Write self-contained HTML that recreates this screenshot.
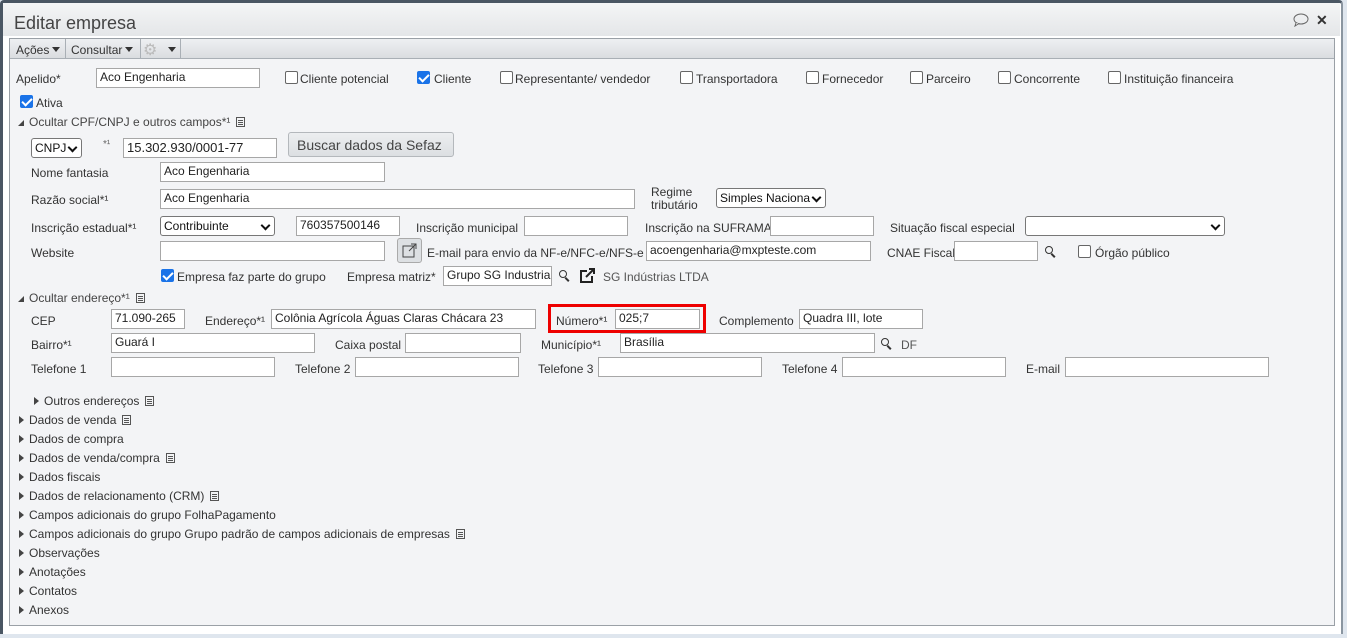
<!DOCTYPE html><html><head><meta charset="utf-8"><style>
*{box-sizing:border-box;margin:0;padding:0}
body{width:1347px;height:638px;overflow:hidden;background:#dfe6ee;font-family:"Liberation Sans",sans-serif;font-size:12px;color:#333;position:relative}
.a{position:absolute;white-space:nowrap}
.win{position:absolute;left:0;top:0;width:1343px;height:634px;background:#fff;border:3px solid #4a5663;border-bottom:none;border-right:2px solid #8a95a0;border-radius:4px 4px 0 0}
.title{position:absolute;left:3px;top:3px;width:1337px;height:33px;background:linear-gradient(#f4f5f6,#e4e6e8)}
.panel{position:absolute;left:9px;top:38px;width:1326px;height:588px;border:1px solid #9aa0a6;background:#f3f4f6}
.tb{position:absolute;left:0;top:0;width:100%;height:20px;background:linear-gradient(#eef0f2,#dadde0);border-bottom:1px solid #a9afb5}
.in{position:absolute;height:20px;border:1px solid #a7a7a7;background:#fff;padding:1px 3px;font-size:12px;color:#222;white-space:nowrap;overflow:hidden}
.cb{position:absolute;width:13px;height:13px;border:1px solid #666;border-radius:2px;background:#fff}
.cb.on{background:#1a73e8;border-color:#1a73e8}
.cb.on::after{content:"";position:absolute;left:3px;top:0px;width:4px;height:8px;border:solid #fff;border-width:0 2px 2px 0;transform:rotate(45deg)}
.sel{position:absolute;height:20px;border:1px solid #777;border-radius:3px;background:#fff;padding:2px 3px;font-size:12px;color:#111}
.sel::after{content:"";position:absolute;right:5px;top:5px;width:5px;height:5px;border:solid #111;border-width:0 2px 2px 0;transform:rotate(45deg)}
.tri{display:inline-block;width:0;height:0;border-top:4px solid transparent;border-bottom:4px solid transparent;border-left:5px solid #444;margin-right:5px;vertical-align:0}
.tdn{display:inline-block;width:0;height:0;border-left:4px solid transparent;border-right:4px solid transparent;border-top:5px solid #333;margin-left:3px;vertical-align:2px}
.opn{display:inline-block;width:0;height:0;border-left:6px solid transparent;border-bottom:6px solid #444;margin-right:5px;vertical-align:0}
.doc{display:inline-block;width:9px;height:10px;border:1px solid #555;margin-left:6px;vertical-align:-1px;background:linear-gradient(#555,#555) 1px 2px/5px 1px no-repeat,linear-gradient(#555,#555) 1px 4px/5px 1px no-repeat,linear-gradient(#555,#555) 1px 6px/5px 1px no-repeat}
.mg{position:absolute;width:8px;height:8px;border:1.5px solid #333;border-radius:50%}
.mg::after{content:"";position:absolute;left:6px;top:6px;width:5px;height:1.5px;background:#333;transform:rotate(45deg);transform-origin:0 0}
</style></head><body>
<div class="win"></div>
<div class="title"><span class="a" style="left:11px;top:10px;font-size:18px;color:#444">Editar empresa</span>
<svg class="a" style="left:1289px;top:10px" width="18" height="14"><ellipse cx="9" cy="6" rx="7" ry="5" fill="none" stroke="#666"/><path d="M4 10 L3 13 L7 10.5" fill="#fff" stroke="#666"/></svg>
<span class="a" style="left:1313px;top:9px;font-size:14px;font-weight:bold;color:#333">✕</span></div>
<div class="panel">
<div class="tb">
<span class="a" style="left:6px;top:4px;color:#333">Ações<span class="tdn"></span></span>
<span class="a" style="left:55px;top:0;width:1px;height:19px;background:#a9afb5"></span>
<span class="a" style="left:61px;top:4px;color:#333">Consultar<span class="tdn"></span></span>
<span class="a" style="left:130px;top:0;width:1px;height:19px;background:#a9afb5"></span>
<span class="a" style="left:133px;top:1px;font-size:16px;color:#bbb">⚙</span>
<span class="a" style="left:155px;top:4px"><span class="tdn"></span></span>
<span class="a" style="left:170px;top:0;width:1px;height:19px;background:#a9afb5"></span>
</div>
</div>
<span class="a" style="left:16px;top:72px">Apelido*</span>
<div class="in" style="left:96px;top:68px;width:164px">Aco Engenharia</div>
<div class="cb" style="left:285px;top:71px"></div><span class="a" style="left:300px;top:72px">Cliente potencial</span>
<div class="cb on" style="left:417px;top:71px"></div><span class="a" style="left:434px;top:72px">Cliente</span>
<div class="cb" style="left:500px;top:71px"></div><span class="a" style="left:515px;top:72px">Representante/ vendedor</span>
<div class="cb" style="left:680px;top:71px"></div><span class="a" style="left:696px;top:72px">Transportadora</span>
<div class="cb" style="left:806px;top:71px"></div><span class="a" style="left:822px;top:72px">Fornecedor</span>
<div class="cb" style="left:910px;top:71px"></div><span class="a" style="left:926px;top:72px">Parceiro</span>
<div class="cb" style="left:998px;top:71px"></div><span class="a" style="left:1014px;top:72px">Concorrente</span>
<div class="cb" style="left:1108px;top:71px"></div><span class="a" style="left:1124px;top:72px">Instituição financeira</span>
<div class="cb on" style="left:20px;top:95px"></div><span class="a" style="left:36px;top:96px">Ativa</span>
<span class="a" style="left:18px;top:115px;color:#444"><span class="opn"></span>Ocultar CPF/CNPJ e outros campos*¹<span class="doc"></span></span>
<div class="sel" style="left:31px;top:138px;width:51px">CNPJ</div>
<span class="a" style="left:103px;top:139px;font-size:10px;color:#666">*¹</span>
<div class="in" style="left:123px;top:138px;width:154px;font-size:13px">15.302.930/0001-77</div>
<div class="a" style="left:288px;top:132px;width:166px;height:25px;border:1px solid #b4b8bc;border-radius:3px;background:linear-gradient(#eceef0,#dcdfe2);font-size:14px;color:#444;padding:4px 8px">Buscar dados da Sefaz</div>
<span class="a" style="left:31px;top:166px">Nome fantasia</span>
<div class="in" style="left:160px;top:162px;width:225px">Aco Engenharia</div>
<span class="a" style="left:31px;top:193px">Razão social*¹</span>
<div class="in" style="left:160px;top:189px;width:475px">Aco Engenharia</div>
<span class="a" style="left:651px;top:186px;line-height:13px">Regime<br>tributário</span>
<div class="sel" style="left:716px;top:188px;width:110px">Simples Naciona</div>
<span class="a" style="left:31px;top:221px">Inscrição estadual*¹</span>
<div class="sel" style="left:160px;top:216px;width:115px">Contribuinte</div>
<div class="in" style="left:296px;top:216px;width:104px">760357500146</div>
<span class="a" style="left:416px;top:221px">Inscrição municipal</span>
<div class="in" style="left:524px;top:216px;width:104px"></div>
<span class="a" style="left:645px;top:221px">Inscrição na SUFRAMA</span>
<div class="in" style="left:770px;top:216px;width:104px"></div>
<span class="a" style="left:890px;top:221px">Situação fiscal especial</span>
<div class="sel" style="left:1025px;top:216px;width:200px"></div>
<span class="a" style="left:31px;top:246px">Website</span>
<div class="in" style="left:160px;top:241px;width:225px"></div>
<div class="a" style="left:397px;top:238px;width:25px;height:25px;border:1px solid #aaa;border-radius:3px;background:#dde0e3"><svg width="23" height="23"><rect x="5" y="7" width="11" height="11" fill="none" stroke="#444"/><path d="M11 12 L18 5 M13 5 H18 V10" fill="none" stroke="#444"/></svg></div>
<span class="a" style="left:427px;top:246px">E-mail para envio da NF-e/NFC-e/NFS-e</span>
<div class="in" style="left:646px;top:241px;width:225px">acoengenharia@mxpteste.com</div>
<span class="a" style="left:887px;top:246px">CNAE Fiscal</span>
<div class="in" style="left:954px;top:241px;width:84px"></div>
<div class="mg" style="left:1045px;top:246px"></div>
<div class="cb" style="left:1078px;top:245px"></div><span class="a" style="left:1095px;top:246px">Órgão público</span>
<div class="cb on" style="left:161px;top:269px"></div><span class="a" style="left:177px;top:270px">Empresa faz parte do grupo</span>
<span class="a" style="left:347px;top:270px">Empresa matriz*</span>
<div class="in" style="left:443px;top:266px;width:109px">Grupo SG Industria</div>
<div class="mg" style="left:559px;top:270px"></div>
<svg class="a" style="left:579px;top:268px" width="18" height="16"><path d="M8 3 H2 V14 H13 V8" fill="none" stroke="#222" stroke-width="2"/><path d="M7 9 L15 1 M10 1 H15 V6" fill="none" stroke="#222" stroke-width="2"/></svg>
<span class="a" style="left:603px;top:270px;color:#555">SG Indústrias LTDA</span>
<span class="a" style="left:18px;top:291px;color:#444"><span class="opn"></span>Ocultar endereço*¹<span class="doc"></span></span>
<span class="a" style="left:31px;top:314px">CEP</span>
<div class="in" style="left:111px;top:309px;width:74px">71.090-265</div>
<span class="a" style="left:205px;top:314px">Endereço*¹</span>
<div class="in" style="left:271px;top:309px;width:265px">Colônia Agrícola Águas Claras Chácara 23</div>
<div class="a" style="left:548px;top:304px;width:158px;height:29px;border:3px solid #e00"></div>
<span class="a" style="left:556px;top:314px">Número*¹</span>
<div class="in" style="left:615px;top:309px;width:85px">025;7</div>
<span class="a" style="left:719px;top:314px">Complemento</span>
<div class="in" style="left:799px;top:309px;width:124px">Quadra III, lote</div>
<span class="a" style="left:31px;top:338px">Bairro*¹</span>
<div class="in" style="left:111px;top:333px;width:204px">Guará I</div>
<span class="a" style="left:335px;top:338px">Caixa postal</span>
<div class="in" style="left:405px;top:333px;width:116px"></div>
<span class="a" style="left:541px;top:338px">Município*¹</span>
<div class="in" style="left:620px;top:333px;width:255px">Brasília</div>
<div class="mg" style="left:881px;top:338px"></div>
<span class="a" style="left:901px;top:338px;color:#555">DF</span>
<span class="a" style="left:31px;top:362px">Telefone 1</span><div class="in" style="left:111px;top:357px;width:164px"></div>
<span class="a" style="left:295px;top:362px">Telefone 2</span><div class="in" style="left:355px;top:357px;width:164px"></div>
<span class="a" style="left:538px;top:362px">Telefone 3</span><div class="in" style="left:598px;top:357px;width:164px"></div>
<span class="a" style="left:782px;top:362px">Telefone 4</span><div class="in" style="left:842px;top:357px;width:164px"></div>
<span class="a" style="left:1026px;top:362px">E-mail</span><div class="in" style="left:1065px;top:357px;width:204px"></div>
<span class="a" style="left:34px;top:394px"><span class="tri"></span>Outros endereços<span class="doc"></span></span>
<span class="a" style="left:19px;top:413px"><span class="tri"></span>Dados de venda<span class="doc"></span></span>
<span class="a" style="left:19px;top:432px"><span class="tri"></span>Dados de compra</span>
<span class="a" style="left:19px;top:451px"><span class="tri"></span>Dados de venda/compra<span class="doc"></span></span>
<span class="a" style="left:19px;top:470px"><span class="tri"></span>Dados fiscais</span>
<span class="a" style="left:19px;top:489px"><span class="tri"></span>Dados de relacionamento (CRM)<span class="doc"></span></span>
<span class="a" style="left:19px;top:508px"><span class="tri"></span>Campos adicionais do grupo FolhaPagamento</span>
<span class="a" style="left:19px;top:527px"><span class="tri"></span>Campos adicionais do grupo Grupo padrão de campos adicionais de empresas<span class="doc"></span></span>
<span class="a" style="left:19px;top:546px"><span class="tri"></span>Observações</span>
<span class="a" style="left:19px;top:565px"><span class="tri"></span>Anotações</span>
<span class="a" style="left:19px;top:584px"><span class="tri"></span>Contatos</span>
<span class="a" style="left:19px;top:603px"><span class="tri"></span>Anexos</span>
</body></html>
